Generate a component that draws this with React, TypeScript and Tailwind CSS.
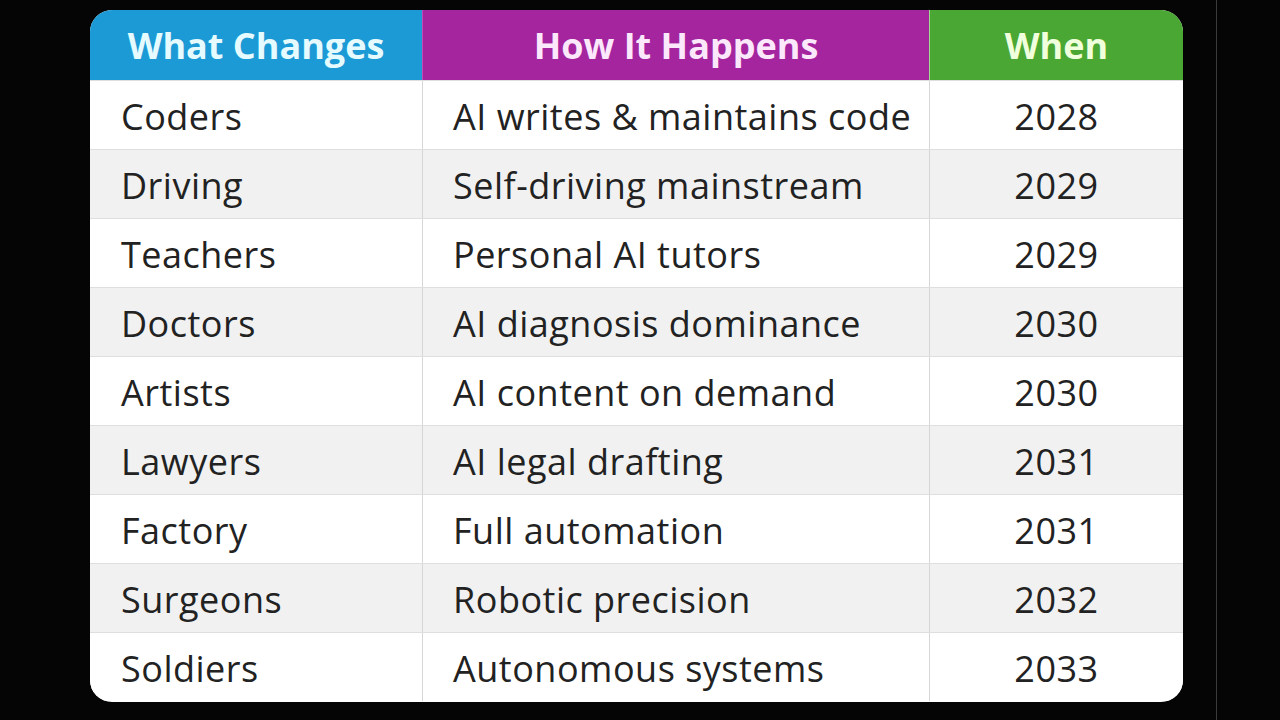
const rows = [
  ["Coders", "AI writes & maintains code", "2028"],
  ["Driving", "Self-driving mainstream", "2029"],
  ["Teachers", "Personal AI tutors", "2029"],
  ["Doctors", "AI diagnosis dominance", "2030"],
  ["Artists", "AI content on demand", "2030"],
  ["Lawyers", "AI legal drafting", "2031"],
  ["Factory", "Full automation", "2031"],
  ["Surgeons", "Robotic precision", "2032"],
  ["Soldiers", "Autonomous systems", "2033"],
];

export default function App() {
  return (
    <div
      className="flex h-[720px] w-[1280px] bg-[#050505] pt-[10px] pl-[90px]"
      style={{ fontFamily: '"Open Sans", "Noto Sans", sans-serif' }}
    >
      <div className="h-[692px] w-[1093px] overflow-hidden rounded-[22px] bg-white">
        {/* header */}
        <div className="grid h-[70px] grid-cols-[332px_507px_254px] text-[36px] font-bold">
          <div className="flex items-center justify-center bg-[#1c9ad6] pt-[2px] text-[#e6fbff]">What Changes</div>
          <div className="flex items-center justify-center border-l border-[#c04ab8] bg-[#a5259f] pt-[2px] text-[#fbe8fb]">
            How It Happens
          </div>
          <div className="flex items-center justify-center border-l border-[#9fd88e] bg-[#4ba733] pt-[2px] text-[#f0ffdc]">
            When
          </div>
        </div>
        {rows.map(([what, how, when], i) => (
          <div
            key={what}
            className={`grid h-[69px] grid-cols-[332px_507px_254px] border-t border-[#dedede] text-[36px] tracking-[0.5px] text-[#222222] ${
              i % 2 === 0 ? "bg-white" : "bg-[#f1f1f1]"
            }`}
          >
            <div className="flex items-center pl-[31px] pt-[4px]">{what}</div>
            <div className="flex items-center border-l border-[#d6d6d6] pl-[30px] pt-[4px]">{how}</div>
            <div className="flex items-center justify-center border-l border-[#d6d6d6] pt-[4px]">{when}</div>
          </div>
        ))}
      </div>
      <div className="ml-[33px] h-[720px] -mt-[10px] w-px bg-[#3a3a3a]" />
    </div>
  );
}
